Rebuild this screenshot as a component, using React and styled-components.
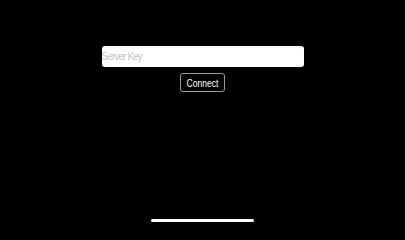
import React, { useState } from 'react';
import styled, { createGlobalStyle } from 'styled-components';

const GlobalStyle = createGlobalStyle`
  html, body {
    margin: 0;
    padding: 0;
    background: #000;
  }
  body {
    font-family: "Liberation Sans", Arial, sans-serif;
  }
`;

const Screen = styled.div`
  width: 405px;
  height: 228px;
  background: #000;
  display: flex;
  flex-direction: column;
  align-items: center;
  box-sizing: border-box;
  padding-top: 46px;
  padding-bottom: 6px;
`;

const Form = styled.div`
  display: flex;
  flex-direction: column;
  align-items: center;
  gap: 6px;
`;

const KeyInput = styled.input`
  width: 202px;
  height: 21px;
  box-sizing: border-box;
  border: none;
  border-radius: 3px;
  background: #fff;
  padding: 0;
  margin: 0;
  outline: none;
  font-family: "Liberation Sans", Arial, sans-serif;
  font-size: 10px;
  letter-spacing: -0.9px;
  color: #000;

  &::placeholder {
    color: #c4c4c8;
  }
`;

const ConnectButton = styled.button`
  width: 45px;
  height: 19px;
  box-sizing: border-box;
  padding: 0;
  background: transparent;
  border: 1px solid #9a9a9a;
  border-radius: 3px;
  color: #fff;
  font-family: "Liberation Sans", Arial, sans-serif;
  font-size: 11px;
  cursor: pointer;
  display: flex;
  align-items: center;
  justify-content: center;
`;

const Label = styled.span`
  display: inline-block;
  transform: scaleX(0.78);
  white-space: nowrap;
`;

const HomeIndicator = styled.div`
  margin-top: auto;
  width: 103px;
  height: 3px;
  border-radius: 2px;
  background: #fff;
`;

export default function App() {
  const [key, setKey] = useState('');

  return (
    <>
      <GlobalStyle />
      <Screen>
        <Form>
          <KeyInput
            placeholder="Server Key"
            value={key}
            onChange={(e) => setKey(e.target.value)}
          />
          <ConnectButton>
            <Label>Connect</Label>
          </ConnectButton>
        </Form>
        <HomeIndicator />
      </Screen>
    </>
  );
}
